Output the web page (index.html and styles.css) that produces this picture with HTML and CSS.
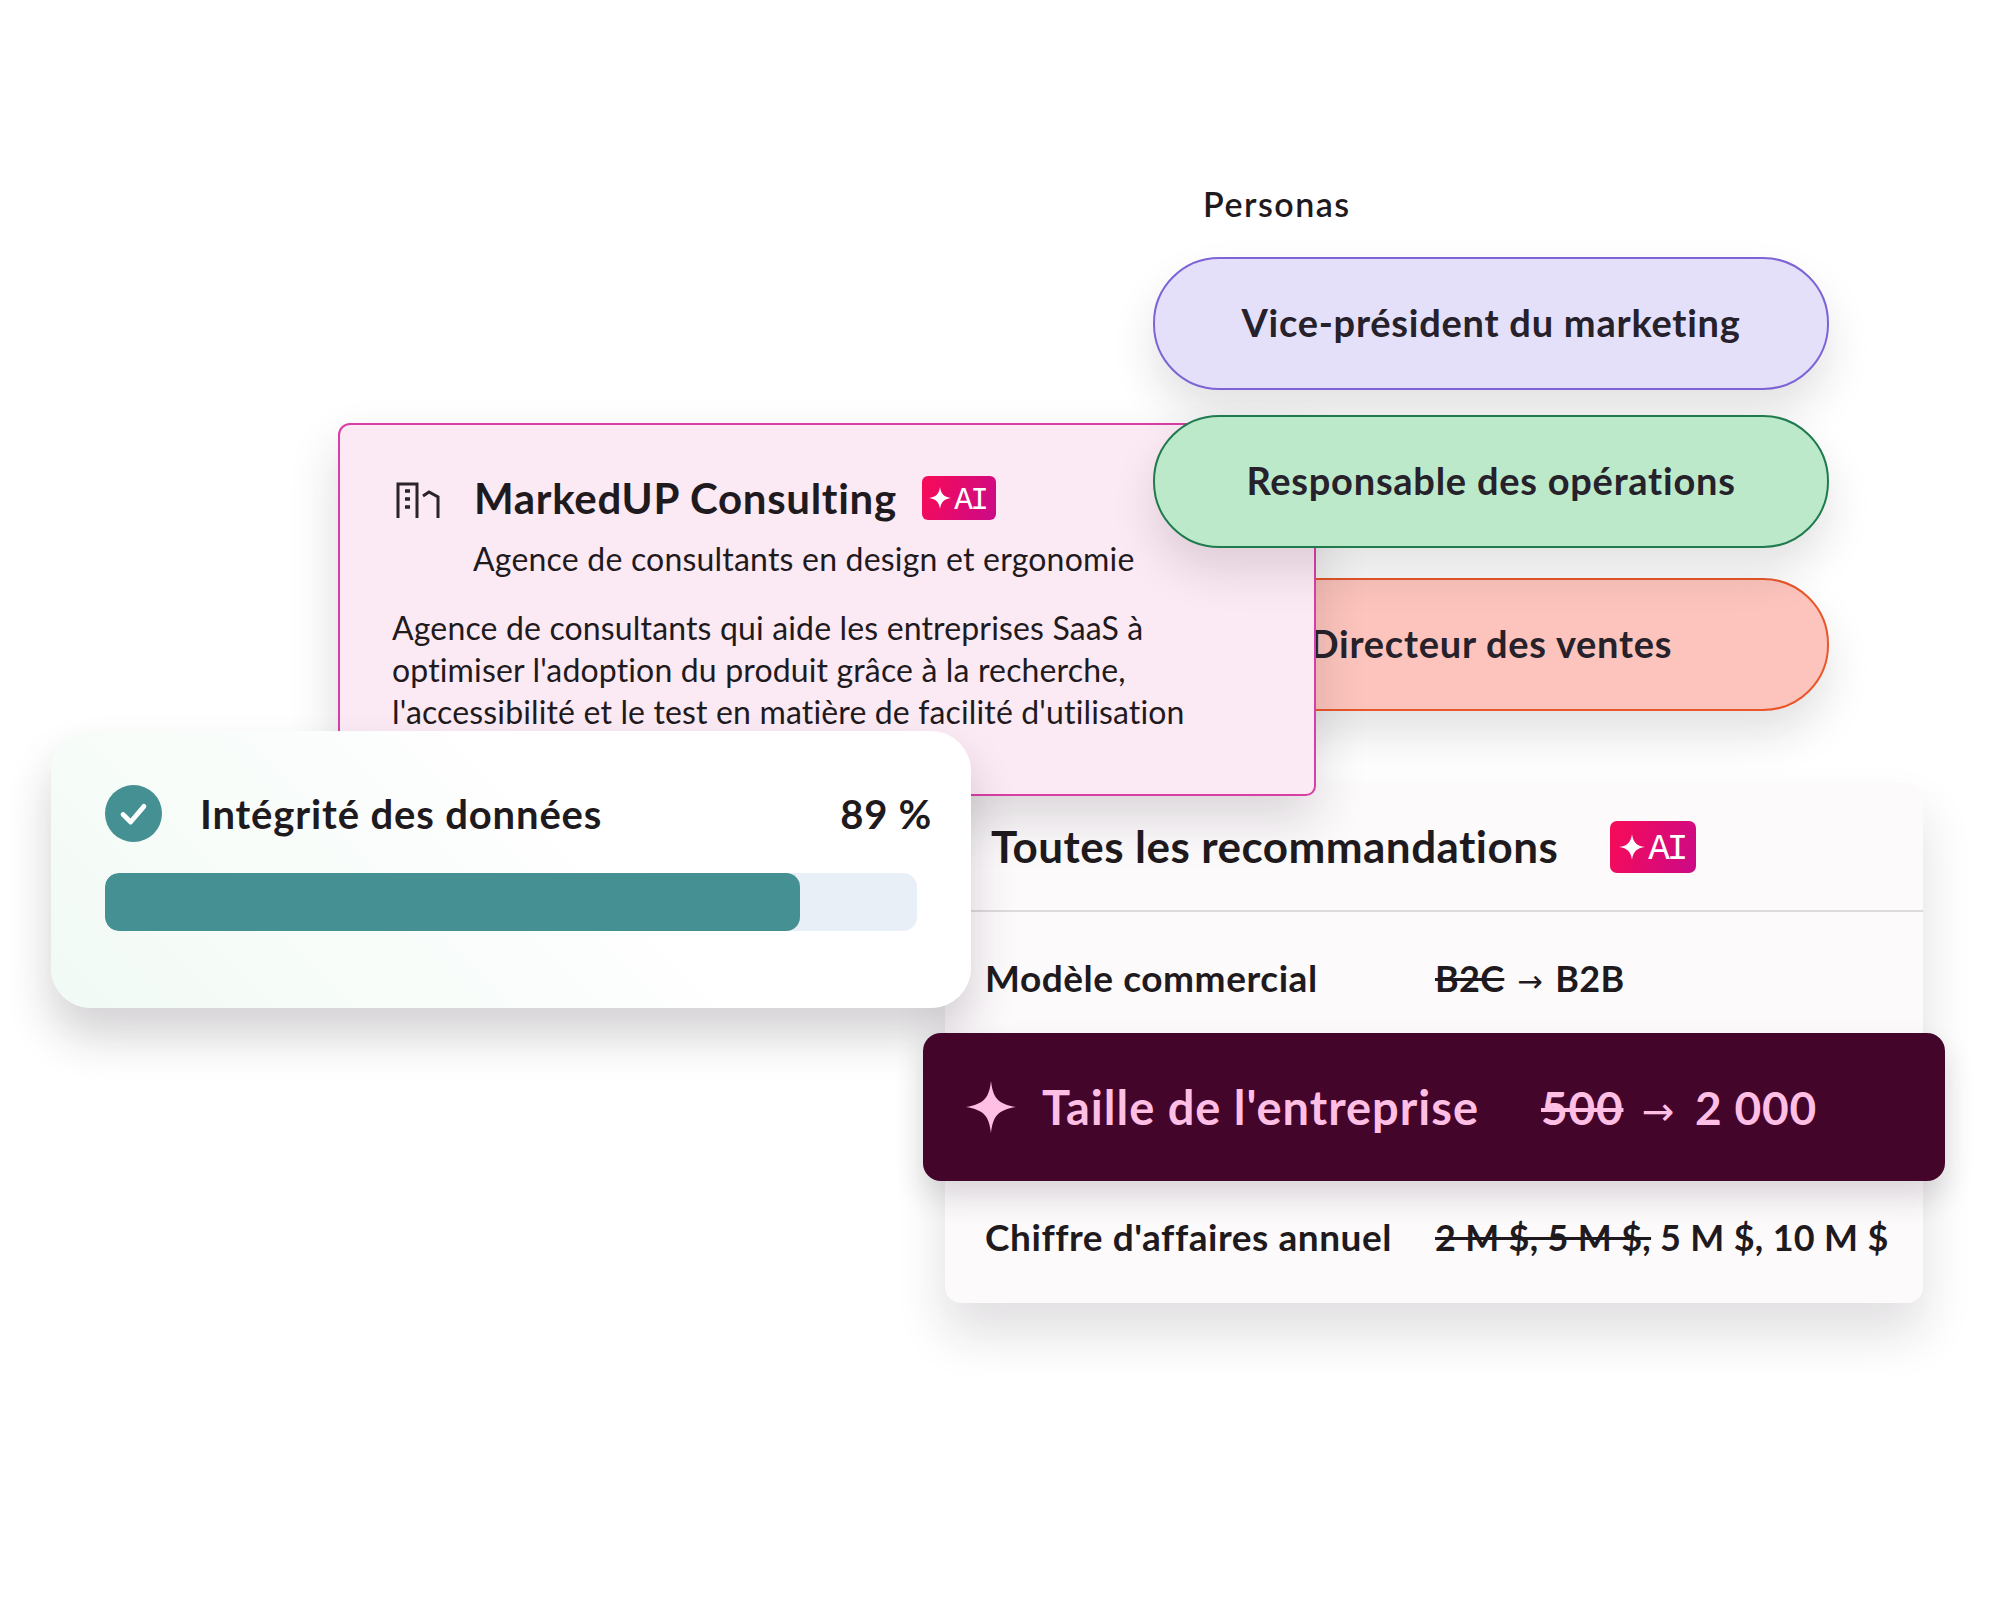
FILE: index.html
```html
<!DOCTYPE html>
<html lang="fr">
<head>
<meta charset="utf-8">
<title>Personas et recommandations</title>
<link rel="stylesheet" href="styles.css">
</head>
<body>
<main class="canvas">
  <h2 class="personas-label">Personas</h2>
  <div class="pill pill-sales">Directeur des ventes</div>

  <section class="recs">
    <header class="recs-head">
      <h2 class="recs-title">Toutes les recommandations</h2>
      <span class="badge badge-lg"><svg class="badge-star" viewBox="0 0 24 24"><path d="M12 1C13 8 16 11 23 12C16 13 13 16 12 23C11 16 8 13 1 12C8 11 11 8 12 1Z"/></svg><span class="badge-text">AI</span></span>
    </header>
    <div class="rec-row rec-row-first">
      <span class="rec-label">Modèle commercial</span>
      <span class="rec-value"><s>B2C</s><span class="arrow">→</span>B2B</span>
    </div>
    <div class="rec-row rec-row-last">
      <span class="rec-label">Chiffre d'affaires annuel</span>
      <span class="rec-value"><s>2 M $, 5 M $,</s> 5 M $, 10 M $</span>
    </div>
  </section>

  <section class="company">
    <div class="company-head">
      <svg class="company-icon" viewBox="0 0 44 36" fill="none" stroke="#2a2327" stroke-width="3">
        <path d="M2 36V2H21V36"/>
        <path d="M9 9h5M9 17h5M9 25h5" stroke-width="3.6"/>
        <path d="M27 14L33 10L42 15V36"/>
      </svg>
      <h1 class="company-name">MarkedUP Consulting</h1>
      <span class="badge badge-sm"><svg class="badge-star" viewBox="0 0 24 24"><path d="M12 1C13 8 16 11 23 12C16 13 13 16 12 23C11 16 8 13 1 12C8 11 11 8 12 1Z"/></svg><span class="badge-text">AI</span></span>
    </div>
    <p class="company-sub">Agence de consultants en design et ergonomie</p>
    <p class="company-desc">Agence de consultants qui aide les entreprises SaaS à<br>optimiser l'adoption du produit grâce à la recherche,<br>l'accessibilité et le test en matière de facilité d'utilisation</p>
  </section>

  <div class="pill pill-vp">Vice-président du marketing</div>
  <div class="pill pill-ops">Responsable des opérations</div>

  <section class="integrity">
    <div class="integrity-head">
      <span class="check"><svg viewBox="0 0 24 24" fill="none" stroke="#fff" stroke-width="2" stroke-linecap="round" stroke-linejoin="round"><path d="M7.6 12.4L10.8 15.6L16.4 9"/></svg></span>
      <span class="integrity-label">Intégrité des données</span>
      <span class="integrity-value">89 %</span>
    </div>
    <div class="track"><div class="fill" style="width:85.6%"></div></div>
  </section>

  <div class="highlight">
    <svg class="highlight-star" viewBox="0 0 50 52"><path d="M25 0C27 17 32 23 50 26C32 29 27 35 25 52C23 35 18 29 0 26C18 23 23 17 25 0Z"/></svg>
    <span class="highlight-label">Taille de l'entreprise</span>
    <span class="highlight-value"><s>500</s><span class="arrow">→</span>2 000</span>
  </div>
</main>
</body>
</html>
```

FILE: styles.css
```css
* { box-sizing: border-box; }
html, body { margin: 0; background: #fff; }
body { font-family: "Lato", "Noto Sans", sans-serif; color: #1f1a1d; }
h1, h2, p { margin: 0; font-weight: inherit; font-size: inherit; }

.canvas { position: relative; width: 2000px; height: 1619px; overflow: hidden; background: #fff; }

.personas-label { position: absolute; left: 1203px; top: 183px; font-size: 34px; font-weight: 600; line-height: 42px; letter-spacing: 1.5px; }

.pill {
  position: absolute; left: 1153px; width: 676px; height: 133px; padding-bottom: 4px;
  display: flex; align-items: center; justify-content: center;
  border-radius: 66px; border: 2px solid;
  font-size: 38px; font-weight: 700; letter-spacing: .75px; color: #26212a;
  box-shadow: 0 24px 44px rgba(40, 30, 40, .13);
}
.pill-vp { top: 257px; background: #e4e0f9; border-color: #7d63d6; z-index: 5; }
.pill-ops { top: 415px; background: #bde9cb; border-color: #1f7a4e; z-index: 5; }
.pill-sales { top: 578px; background: #fcc4bc; border-color: #e8562a; z-index: 1; }

.company {
  position: absolute; left: 338px; top: 423px; width: 978px; height: 373px; z-index: 4;
  padding: 51px 52px 0;
  background: #fbe9f3; border: 2px solid #d83fa6; border-radius: 12px 12px 10px 10px;
  box-shadow: 0 24px 50px rgba(40, 30, 40, .16);
}
.company-head { display: flex; align-items: center; height: 44px; }
.company-icon { width: 44px; height: 36px; margin: 4px 34px 0 4px; flex: none; }
.company-name { font-size: 42px; font-weight: 700; letter-spacing: .7px; white-space: nowrap; }
.company-sub { margin: 18px 0 0 81px; font-size: 32px; line-height: 42px; letter-spacing: .2px; white-space: nowrap; }
.company-desc { margin-top: 27px; font-size: 32px; line-height: 42px; letter-spacing: .15px; white-space: nowrap; }

.badge {
  display: inline-flex; align-items: center; justify-content: center;
  color: #fff; font-family: "Liberation Mono", monospace;
  background: linear-gradient(110deg, #f80b56, #cb0a88);
}
.badge-star { fill: #fff; flex: none; }
.badge-text { padding-top: 5px; }
.badge-sm { width: 74px; height: 44px; margin: 0 0 0 25px; border-radius: 6px; font-size: 31px; }
.badge-sm .badge-star { width: 24px; height: 24px; margin-right: 2px; }
.badge-sm .badge-text { letter-spacing: -2.5px; margin-right: 3px; }
.badge-lg { width: 86px; height: 52px; margin-left: 52px; border-radius: 7px; font-size: 36px; }
.badge-lg .badge-star { width: 28px; height: 28px; margin-right: 2px; }
.badge-lg .badge-text { letter-spacing: -3px; margin-right: 3px; }

.recs {
  position: absolute; left: 945px; top: 783px; width: 978px; height: 520px; z-index: 2;
  background: #fdfafc; border-radius: 16px;
  box-shadow: 0 30px 50px rgba(40, 30, 40, .14);
}
.recs-head { display: flex; align-items: center; height: 129px; padding: 0 0 0 46px; border-bottom: 2px solid #dedadd; }
.recs-title { font-size: 44px; font-weight: 700; letter-spacing: .45px; line-height: 50px; padding-bottom: 2px; white-space: nowrap; }
.rec-row {
  display: grid; grid-template-columns: 450px auto; padding-left: 40px;
  font-size: 36px; font-weight: 700; line-height: 44px; white-space: nowrap;
}
.rec-label { font-size: 37px; letter-spacing: .55px; }
.rec-value { letter-spacing: .3px; }
.rec-row-first { margin-top: 44px; }
.rec-row-last { margin-top: 211px; }
.arrow { font-family: "DejaVu Sans", sans-serif; font-weight: 400; font-size: .85em; margin: 0 12px 0 13px; }

.integrity {
  position: absolute; left: 51px; top: 731px; width: 920px; height: 277px; z-index: 6;
  padding: 54px 52px 0 54px;
  background: linear-gradient(45deg, #f1faf4 0%, #fff 62%);
  border-radius: 40px;
  box-shadow: 0 28px 46px rgba(40, 30, 40, .2);
}
.integrity-head { display: flex; align-items: center; height: 57px; }
.check { width: 57px; height: 57px; border-radius: 50%; background: #459093; flex: none; display: flex; }
.integrity-label { margin-left: 38px; font-size: 40px; font-weight: 700; letter-spacing: .85px; line-height: 54px; }
.integrity-value { margin-left: auto; margin-right: -13px; font-size: 40px; font-weight: 700; letter-spacing: .7px; line-height: 54px; }
.track { width: 812px; height: 58px; margin-top: 31px; background: #e9eff7; border-radius: 14px; overflow: hidden; }
.fill { height: 100%; background: #459093; border-radius: 14px; }

.highlight {
  position: absolute; left: 923px; top: 1033px; width: 1022px; height: 148px; z-index: 7;
  display: flex; align-items: center; padding-left: 43px;
  background: #44052b; color: #ffbfe4; border-radius: 18px;
  font-size: 46px; font-weight: 700; white-space: nowrap;
  box-shadow: 0 16px 30px rgba(40, 30, 40, .16);
}
.highlight-star { width: 50px; height: 52px; fill: #ffbfe4; flex: none; }
.highlight-label { margin-left: 26px; font-size: 47px; letter-spacing: 1px; }
.highlight-value { position: absolute; left: 618px; letter-spacing: .8px; }
.highlight-value .arrow { margin: 0 20px 0 18px; }
```
